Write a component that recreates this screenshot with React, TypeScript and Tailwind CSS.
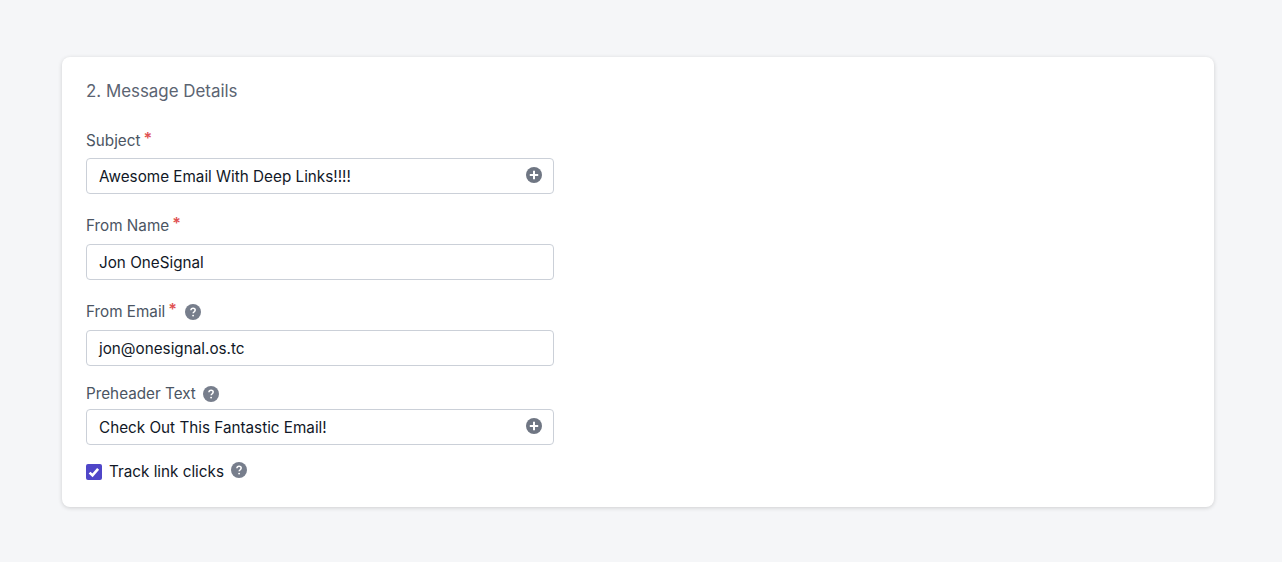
function HelpIcon() {
  return (
    <svg viewBox="0 0 16 16" className="h-4 w-4 shrink-0">
      <circle cx="8" cy="8" r="8" fill="#777e8c" />
      <path
        d="M5.9 6.2c.1-1.2 1-1.9 2.2-1.9 1.2 0 2.1.7 2.1 1.8 0 .8-.4 1.2-1.1 1.7-.6.4-.9.7-.9 1.3v.2"
        fill="none"
        stroke="#fff"
        strokeWidth="1.5"
      />
      <circle cx="8.1" cy="11.6" r="0.95" fill="#fff" />
    </svg>
  );
}

function PlusIcon() {
  return (
    <svg viewBox="0 0 16 16" className="h-4 w-4 shrink-0 -translate-y-px">
      <circle cx="8" cy="8" r="8" fill="#6f7683" />
      <path d="M8 3.8v8.4M3.8 8h8.4" stroke="#fff" strokeWidth="2" />
    </svg>
  );
}

function Label({
  text,
  required,
  help,
  className,
}: {
  text: string;
  required?: boolean;
  help?: boolean;
  className?: string;
}) {
  return (
    <div className={`flex h-5 items-center text-[15.25px] leading-5 text-[#4b5563] ${className ?? ""}`}>
      <span className="translate-y-px">{text}</span>
      {required && <span className="ml-[3px] -translate-y-[2px] text-[16px] font-semibold text-[#e05252]">*</span>}
      {help && <span className={required ? "ml-[8px] translate-y-px" : "ml-[7px] translate-y-px"}><HelpIcon /></span>}
    </div>
  );
}

function Field({ value, plus }: { value: string; plus?: boolean }) {
  return (
    <div className="flex h-9 w-[468px] items-center justify-between rounded border border-[#cbd0d8] bg-white pl-3 pr-[11px] text-[15.25px] text-[#111827]">
      <span className="translate-y-px">{value}</span>
      {plus && <PlusIcon />}
    </div>
  );
}

export default function App() {
  return (
    <div className="h-[562px] overflow-hidden bg-[#f5f6f8] pl-[62px] pt-[57px] font-['Inter',sans-serif]">
      <section className="h-[450px] w-[1152px] rounded-lg bg-white px-6 pt-6 shadow-[0_1px_4px_rgba(0,0,0,0.16)]">
        <h2 className="text-[16.9px] leading-5 text-[#5b6472]">2. Message Details</h2>

        <Label text="Subject" required className="mt-[29px]" />
        <div className="mt-2"><Field value="Awesome Email With Deep Links!!!!" plus /></div>

        <Label text="From Name" required className="mt-[21px]" />
        <div className="mt-[9px]"><Field value="Jon OneSignal" /></div>

        <Label text="From Email" required help className="mt-[21px]" />
        <div className="mt-[9px]"><Field value="jon@onesignal.os.tc" /></div>

        <Label text="Preheader Text" help className="mt-[17px]" />
        <div className="mt-[6px]"><Field value="Check Out This Fantastic Email!" plus /></div>

        <div className="mt-[19px] flex h-4 items-center">
          <span className="flex h-4 w-4 items-center justify-center rounded-[2px] bg-[#4f46c8]">
            <svg viewBox="0 0 16 16" className="h-4 w-4">
              <path d="M3.6 8.6l2.9 2.8 5.6-6.6" fill="none" stroke="#fff" strokeWidth="2.6" />
            </svg>
          </span>
          <span className="ml-[7px] text-[15.25px] text-[#111827]">Track link clicks</span>
          <span className="ml-[7px] -translate-y-[2px]"><HelpIcon /></span>
        </div>
      </section>
    </div>
  );
}
